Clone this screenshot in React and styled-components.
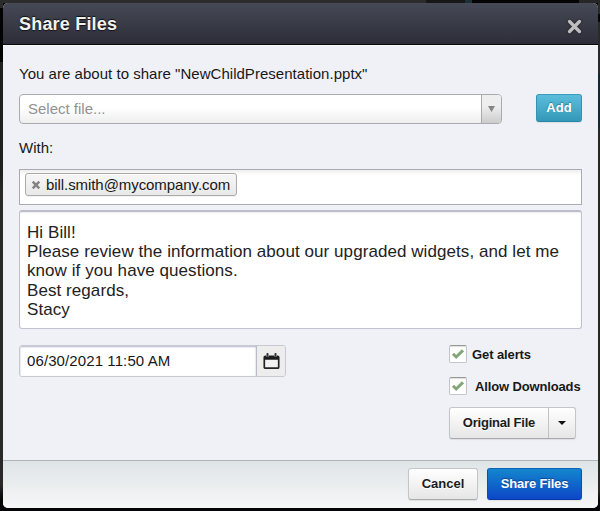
import React from "react";
import styled, { createGlobalStyle } from "styled-components";

const GlobalStyle = createGlobalStyle`
  *, *::before, *::after { box-sizing: border-box; }
  body { margin: 0; background: #111; overflow: hidden; }
`;

const Backdrop = styled.main`
  height: 511px;
  width: 600px;
  padding: 3px 2px 3px 3px;
  background:
    linear-gradient(90deg, #2c2c2c 0 426px, #171717 426px 465px, #1d3038 465px 472px, #050505 472px 579px, #262626 579px) 0 0 / 100% 3px no-repeat,
    linear-gradient(#2b2b2b 0 8px, #020202 8px 62px, #202020 62px 175px, #2a2829 190px 485px, #050505 500px) 0 0 / 3px 100% no-repeat,
    linear-gradient(#292929 0 14px, #050505 14px 22px, #292a2a 22px 74px, #14292f 74px 125px, #282923 132px 490px, #080808 500px) 100% 0 / 2px 100% no-repeat,
    #050507;
  font-family: "Liberation Sans", Arial, Helvetica, sans-serif;
  font-size: 15px;
  color: #181818;
`;

const Dialog = styled.section`
  display: flex;
  flex-direction: column;
  height: 505px;
  border-radius: 5px;
  overflow: hidden;
  background: #f0f1f7;
`;

const Header = styled.header`
  height: 42px;
  display: flex;
  align-items: center;
  justify-content: space-between;
  padding: 0 16px;
  background: linear-gradient(#464956, #2c2d38);
  border-bottom: 1px solid #08080b;
  box-shadow: 0 1px #fafafa;
`;

const Title = styled.h1`
  margin: 0;
  font-size: 18px;
  line-height: 22px;
  letter-spacing: 0.2px;
  color: #f1f1f0;
  text-shadow: 0 -1px 1px #111, 0 1px 1px #15151c;
`;

const CloseButton = styled.button`
  display: flex;
  padding: 0;
  margin-top: 5px;
  border: 0;
  background: none;
  filter: drop-shadow(0 0 1px #14151c);
`;

const Body = styled.div`
  flex: 1;
  display: flex;
  flex-direction: column;
  padding: 20px 16px 0;
`;

const Text = styled.span`
  display: block;
  white-space: nowrap;
  font-size: ${(p) => p.$size || 15}px;
  line-height: 18px;
  letter-spacing: ${(p) => p.$tracking || 0}px;
  font-weight: ${(p) => (p.$bold ? 700 : 400)};
`;

const SelectRow = styled.div`
  display: flex;
  justify-content: space-between;
  align-items: flex-start;
  margin: 11px 0 15px;
`;

const Select = styled.div`
  width: 483px;
  height: 30px;
  display: flex;
  align-items: center;
  justify-content: space-between;
  padding-left: 8px;
  border: 1px solid #aaabb0;
  border-radius: 4px;
  overflow: hidden;
  background: linear-gradient(#fff 45%, #eee);
  color: #929292;
`;

const SelectArrow = styled.span`
  display: flex;
  align-items: center;
  justify-content: center;
  width: 20px;
  height: 100%;
  border-left: 1px solid #aaa;
  background: linear-gradient(#eee 40%, #ccc);
`;

const Button = styled.button`
  display: flex;
  align-items: center;
  justify-content: center;
  width: ${(p) => p.$w}px;
  height: ${(p) => p.$h || 32}px;
  padding: 0;
  font-family: inherit;
  color: #1b1b1b;
  border: 1px solid #c4c5c9;
  border-bottom-color: #aaa;
  border-radius: 3px;
  background: linear-gradient(#fff, #e6e6e6);
  text-shadow: 0 1px #fff;
  box-shadow: 0 1px 1px rgba(0, 0, 0, 0.08);
`;

const AddButton = styled(Button)`
  color: #fff;
  border-color: #3b9cb9 #3294b1 #2887a4;
  background: linear-gradient(#5bbddb, #3499b8);
  text-shadow: 0 -1px 1px #257f99;
`;

const PrimaryButton = styled(Button)`
  color: #fff;
  border-color: #0c65b8 #0c4dba #093aa5;
  background: linear-gradient(#1486cd, #0c47c8);
  text-shadow: 0 -1px 1px #084596;
`;

const Recipients = styled.div`
  height: 36px;
  margin-top: 12px;
  padding: 3px 5px;
  border: 1px solid #aaabb0;
  background: linear-gradient(#eee, #fff 5px);
`;

const Tag = styled.div`
  display: flex;
  align-items: center;
  gap: 5px;
  width: 212px;
  height: 23px;
  padding-left: 5px;
  border: 1px solid #aaa;
  border-radius: 3px;
  background: linear-gradient(#f4f4f4 20%, #e8e8e8);
  box-shadow: inset 0 1px #fff, 0 1px 1px rgba(0, 0, 0, 0.05);
`;

const Message = styled.div`
  height: 119px;
  margin-top: 5px;
  padding: 11px 7px;
  border: 1px solid #c1c2d0;
  border-top: 2px solid #bcbdcd;
  border-radius: 3px;
  background: #fff;
  color: #222;
  box-shadow: inset 0 1px 2px rgba(0, 0, 0, 0.08);
`;

const MessageLine = styled(Text)`
  line-height: 19.2px;
`;

const Options = styled.div`
  display: flex;
  justify-content: space-between;
  margin-top: 16px;
`;

const DateField = styled.div`
  display: flex;
  align-items: stretch;
  width: 267px;
  height: 32px;
  border: 1px solid #c8c9cf;
  border-radius: 3px;
  overflow: hidden;
`;

const DateValue = styled.div`
  width: 236px;
  display: flex;
  align-items: center;
  padding-left: 7px;
  background: #fff;
  box-shadow: inset 0 1px 2px #b4b7ca;
`;

const CalendarButton = styled.div`
  flex: 1;
  display: flex;
  align-items: center;
  justify-content: center;
  border-left: 1px solid #b9bbca;
  background: #ededed;
`;

const Choices = styled.div`
  width: 133px;
  display: flex;
  flex-direction: column;
`;

const Choice = styled.label`
  display: flex;
  align-items: center;
  gap: ${(p) => p.$gap}px;
  height: 18px;
  margin-bottom: 14px;
`;

const ChoiceLabel = styled(Text)`
  margin-top: 2px;
`;

const Checkbox = styled.span`
  display: flex;
  align-items: center;
  justify-content: center;
  flex: none;
  width: 18px;
  height: 18px;
  border: 1px solid #c5c6c9;
  border-top-color: #999;
  border-radius: 2px;
  background: #fff;
  box-shadow: inset 0 1px 1px #ddd;
`;

const SplitButton = styled(Button)`
  margin-top: -2px;
`;

const SplitLabel = styled.span`
  display: flex;
  align-items: center;
  justify-content: center;
  width: 98px;
  height: 100%;
`;

const SplitArrow = styled.span`
  display: flex;
  align-items: center;
  justify-content: center;
  flex: 1;
  height: 100%;
  border-left: 1px solid #c2c2c4;
`;

const Footer = styled.footer`
  display: flex;
  justify-content: flex-end;
  gap: 9px;
  height: 48px;
  padding: 7px 16px;
  border-top: 1px solid #b1b3b7;
  background: linear-gradient(#dfe4e7, #f5f6f6 95%);
`;

function Cross({ size, color, weight, cap = "butt" }) {
  return (
    <svg width={size} height={size} viewBox="0 0 14 14">
      <path d="M2.4 2.4 11.6 11.6M11.6 2.4 2.4 11.6" stroke={color} strokeWidth={weight} strokeLinecap={cap} />
    </svg>
  );
}

function Triangle({ color, width = 7, height = 5 }) {
  return (
    <svg width={width} height={height} viewBox="0 0 8 5" preserveAspectRatio="none">
      <path d="M0 0H8L4 5Z" fill={color} />
    </svg>
  );
}

function Check() {
  return (
    <svg width="14" height="12" viewBox="0 0 14 12">
      <path d="M2 5.8 5.2 9 12 2.4" fill="none" stroke="#82a878" strokeWidth="3" />
    </svg>
  );
}

function Calendar() {
  return (
    <svg width="17" height="18" viewBox="0 0 17 18">
      <rect x="1.3" y="4.3" width="14.4" height="11.9" rx="1" fill="#f1f1f1" stroke="#222" strokeWidth="1.7" />
      <path d="M1.3 4.2H15.7V7.8H1.3Z" fill="#1b1b1b" />
      <path d="M4.5 1.5V4.6M12.5 1.5V4.6" stroke="#aaa" strokeWidth="3" />
      <path d="M4.5 1V4.4M12.5 1V4.4" stroke="#333" strokeWidth="1.5" />
    </svg>
  );
}

const MESSAGE = [
  "Hi Bill!",
  "Please review the information about our upgraded widgets, and let me",
  "know if you have questions.",
  "Best regards,",
  "Stacy",
];

export default function App() {
  return (
    <>
      <GlobalStyle />
      <Backdrop>
        <Dialog>
          <Header>
            <Title>Share Files</Title>
            <CloseButton aria-label="Close"><Cross size={15} color="#bdbdbd" weight={3.2} cap="round" /></CloseButton>
          </Header>
          <Body>
            <Text $tracking={0.03}>You are about to share "NewChildPresentation.pptx"</Text>
            <SelectRow>
              <Select>
                <Text>Select file...</Text>
                <SelectArrow><Triangle color="#858585" width={7} height={6} /></SelectArrow>
              </Select>
              <AddButton $w={46} $h={28}><Text $size={13} $bold>Add</Text></AddButton>
            </SelectRow>
            <Text>With:</Text>
            <Recipients>
              <Tag>
                <Cross size={10} color="#858585" weight={3.6} />
                <Text $tracking={-0.07}>bill.smith@mycompany.com</Text>
              </Tag>
            </Recipients>
            <Message>
              {MESSAGE.map((line) => <MessageLine key={line} $size={17} $tracking={0.07}>{line}</MessageLine>)}
            </Message>
            <Options>
              <DateField>
                <DateValue><Text $tracking={0.1}>06/30/2021 11:50 AM</Text></DateValue>
                <CalendarButton><Calendar /></CalendarButton>
              </DateField>
              <Choices>
                <Choice $gap={5}><Checkbox><Check /></Checkbox><ChoiceLabel $size={13} $bold $tracking={-0.1}>Get alerts</ChoiceLabel></Choice>
                <Choice $gap={8}><Checkbox><Check /></Checkbox><ChoiceLabel $size={13} $bold $tracking={-0.14}>Allow Downloads</ChoiceLabel></Choice>
                <SplitButton $w={127}>
                  <SplitLabel><Text $size={13} $bold $tracking={-0.22}>Original File</Text></SplitLabel>
                  <SplitArrow><Triangle color="#111" width={8} height={4} /></SplitArrow>
                </SplitButton>
              </Choices>
            </Options>
          </Body>
          <Footer>
            <Button $w={70}><Text $size={13} $bold>Cancel</Text></Button>
            <PrimaryButton $w={95}><Text $size={13} $bold $tracking={-0.18}>Share Files</Text></PrimaryButton>
          </Footer>
        </Dialog>
      </Backdrop>
    </>
  );
}
